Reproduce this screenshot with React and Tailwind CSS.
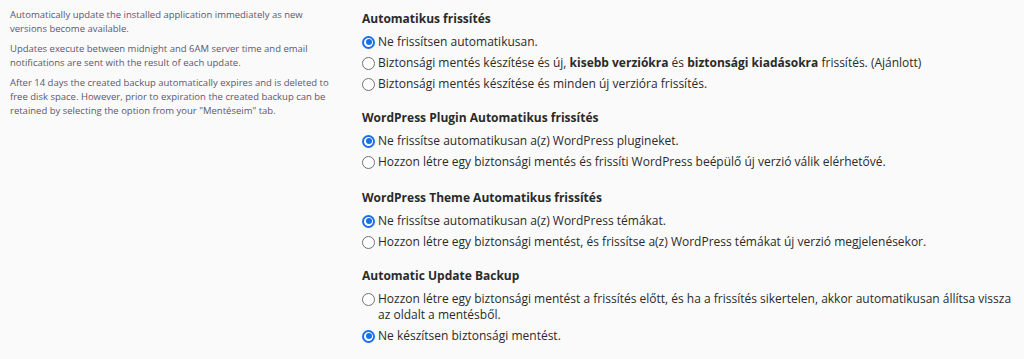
import React from "react";

function Radio({ checked }) {
  return checked ? (
    <span className="flex h-[13px] w-[13px] shrink-0 items-center justify-center rounded-full border-[2px] border-[#1a6ff0] bg-white">
      <span className="h-[6px] w-[6px] rounded-full bg-[#1a6ff0]" />
    </span>
  ) : (
    <span className="h-[13px] w-[13px] shrink-0 rounded-full border border-[#707070] bg-white" />
  );
}

function Option({ checked, children }) {
  return (
    <label className="flex items-start gap-[3px]">
      <span className="flex h-[16px] items-center">
        <Radio checked={checked} />
      </span>
      <span className="leading-[16px]">{children}</span>
    </label>
  );
}

function Group({ title, children, className = "" }) {
  return (
    <div className={className}>
      <div className="mb-[7px] text-[12px] font-bold leading-[16px] text-[#2a2a2a]">{title}</div>
      <div className="flex flex-col gap-[5px] text-[12px] text-[#2a2a2a]">{children}</div>
    </div>
  );
}

export default function App() {
  return (
    <div
      className="flex h-[359px] w-[1024px] bg-[#fafafa]"
      style={{ fontFamily: '"Open Sans", "Noto Sans", sans-serif' }}
    >
      <div className="w-[362px] shrink-0 pl-[10px] pr-[30px] pt-[8px] text-[9.5px] leading-[14px] text-[#5a586b]">
        <p>Automatically update the installed application immediately as new versions become available.</p>
        <p className="mt-[6px]">Updates execute between midnight and 6AM server time and email notifications are sent with the result of each update.</p>
        <p className="mt-[6px]">After 14 days the created backup automatically expires and is deleted to free disk space. However, prior to expiration the created backup can be retained by selecting the option from your "Mentéseim" tab.</p>
      </div>
      <div className="flex flex-col pt-[11px]">
        <Group title="Automatikus frissítés">
          <Option checked>Ne frissítsen automatikusan.</Option>
          <Option>
            Biztonsági mentés készítése és új, <b>kisebb verziókra</b> és <b>biztonsági kiadásokra</b> frissítés. (Ajánlott)
          </Option>
          <Option>Biztonsági mentés készítése és minden új verzióra frissítés.</Option>
        </Group>
        <Group title="WordPress Plugin Automatikus frissítés" className="mt-[18px]">
          <Option checked>Ne frissítse automatikusan a(z) WordPress plugineket.</Option>
          <Option>Hozzon létre egy biztonsági mentés és frissíti WordPress beépülő új verzió válik elérhetővé.</Option>
        </Group>
        <Group title="WordPress Theme Automatikus frissítés" className="mt-[20px]">
          <Option checked>Ne frissítse automatikusan a(z) WordPress témákat.</Option>
          <Option>Hozzon létre egy biztonsági mentést, és frissítse a(z) WordPress témákat új verzió megjelenésekor.</Option>
        </Group>
        <Group title="Automatic Update Backup" className="mt-[18px]">
          <Option>
            Hozzon létre egy biztonsági mentést a frissítés előtt, és ha a frissítés sikertelen, akkor automatikusan állítsa vissza
            <br />
            az oldalt a mentésből.
          </Option>
          <Option checked>Ne készítsen biztonsági mentést.</Option>
        </Group>
      </div>
    </div>
  );
}
